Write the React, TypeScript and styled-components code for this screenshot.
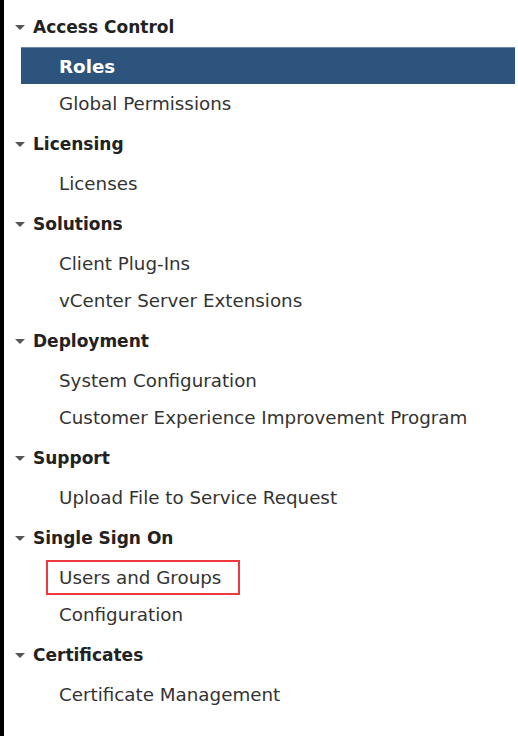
import React from "react";
import styled, { createGlobalStyle } from "styled-components";

const Global = createGlobalStyle`
  html, body { margin: 0; padding: 0; background: #fff; }
  body { font-family: "DejaVu Sans", "Noto Sans", sans-serif; }
`;

const Frame = styled.div`
  width: 518px;
  height: 736px;
  box-sizing: border-box;
  border-left: 4px solid #000;
  padding: 7px 3px 0 11px;
  display: flex;
  flex-direction: column;
  gap: 3px;
  overflow: hidden;
`;

const Group = styled.div`
  display: flex;
  flex-direction: column;
`;

const Header = styled.div`
  height: 37px;
  box-sizing: border-box;
  padding-top: 2px;
  display: flex;
  align-items: center;
  gap: 8px;
  margin-bottom: 3px;
  font-size: 17px;
  font-weight: 700;
  color: #222;
`;

const Caret = styled.span`
  width: 0;
  height: 0;
  border-left: 5px solid transparent;
  border-right: 5px solid transparent;
  border-top: 5px solid #565656;
  margin-top: 1px;
`;

const Item = styled.div<{ $active?: boolean }>`
  height: 37px;
  box-sizing: border-box;
  display: flex;
  align-items: center;
  margin-left: 6px;
  padding-left: 38px;
  font-size: 18.3px;
  font-weight: ${(p) => (p.$active ? 700 : 400)};
  color: ${(p) => (p.$active ? "#fff" : "#333")};
  background: ${(p) => (p.$active ? "#2d547d" : "transparent")};
  border-top: 1px solid ${(p) => (p.$active ? "#6a8bb0" : "transparent")};
`;

const Marked = styled.span`
  display: inline-flex;
  align-items: center;
  height: 35px;
  box-sizing: border-box;
  border: 2px solid #f0393d;
  margin-left: -13px;
  padding: 0 17px 0 11px;
`;

const groups: { title: string; items: string[] }[] = [
  { title: "Access Control", items: ["Roles", "Global Permissions"] },
  { title: "Licensing", items: ["Licenses"] },
  { title: "Solutions", items: ["Client Plug-Ins", "vCenter Server Extensions"] },
  { title: "Deployment", items: ["System Configuration", "Customer Experience Improvement Program"] },
  { title: "Support", items: ["Upload File to Service Request"] },
  { title: "Single Sign On", items: ["Users and Groups", "Configuration"] },
  { title: "Certificates", items: ["Certificate Management"] },
];

export default function App() {
  return (
    <>
      <Global />
      <Frame>
        {groups.map((g) => (
          <Group key={g.title}>
            <Header>
              <Caret />
              {g.title}
            </Header>
            {g.items.map((it) => (
              <Item key={it} $active={it === "Roles"}>
                {it === "Users and Groups" ? <Marked>{it}</Marked> : it}
              </Item>
            ))}
          </Group>
        ))}
      </Frame>
    </>
  );
}
